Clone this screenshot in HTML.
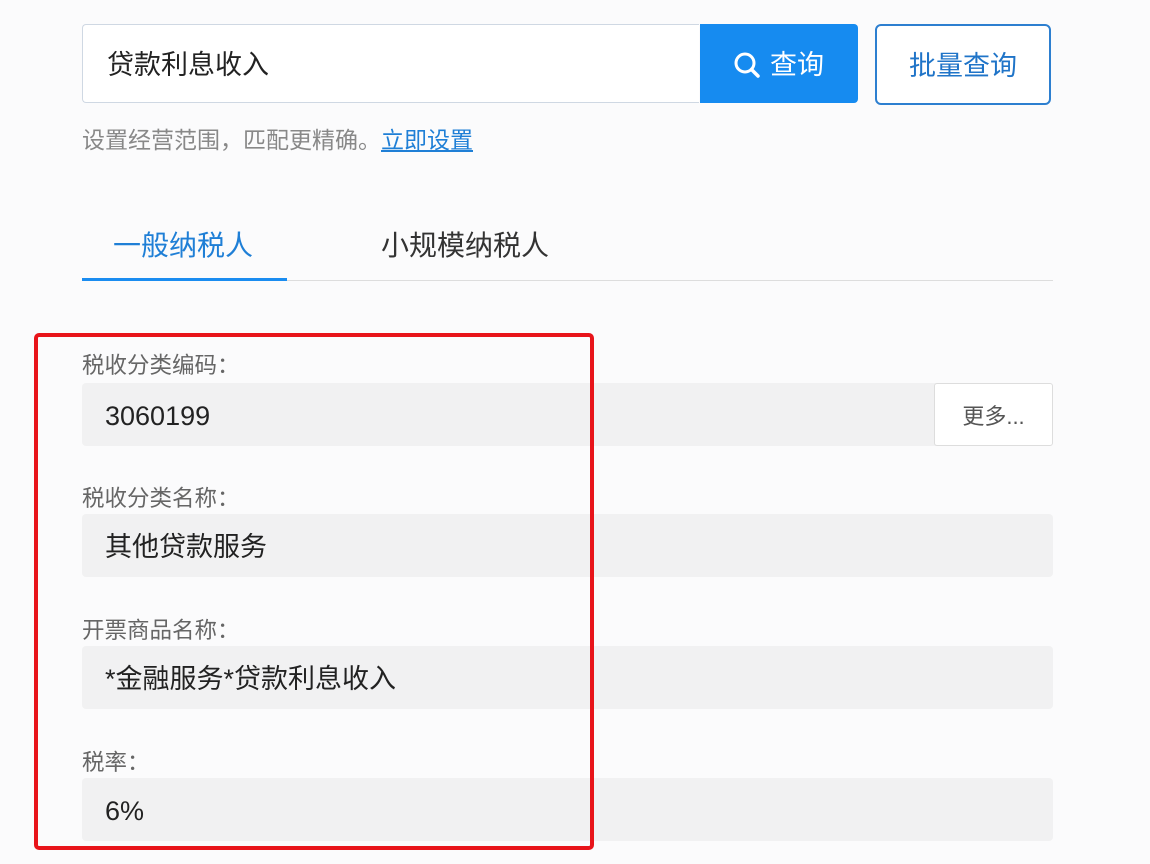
<!DOCTYPE html>
<html><head><meta charset="utf-8"><style>
body{margin:0;width:1150px;height:864px;background:#fbfbfc;font-family:"Liberation Sans","Noto Sans CJK SC",sans-serif;position:relative;overflow:hidden}
.a{position:absolute}
.inp{left:82px;top:24px;width:616px;height:77px;border:1px solid #cfd8e3;border-right:none;border-radius:4px 0 0 4px;background:#fff;font-size:27px;color:#222;line-height:81px;box-sizing:content-box}
.btn{left:700px;top:24px;width:158px;height:79px;background:#168bf0;border-radius:0 4px 4px 0;color:#fff;font-size:27px;line-height:83px}
.bb{left:875px;top:24px;width:172px;height:77px;border:2px solid #2d7fd0;border-radius:6px;color:#1f74c8;font-size:27px;line-height:81px;text-align:center;background:#fff}
.lab{left:82px;font-size:22.5px;color:#666}
.f{left:82px;width:971px;height:63px;background:#f1f1f2;border-radius:4px;font-size:27px;color:#222;line-height:67px;text-indent:23px}
</style></head><body>
<div class="a inp"><span style="margin-left:24px">贷款利息收入</span></div>
<div class="a btn"><svg class="a" style="left:33px;top:27px" width="28" height="28" viewBox="0 0 28 28"><circle cx="12" cy="12" r="9" fill="none" stroke="#fff" stroke-width="3"/><path d="M18.5 18.5L25 25" stroke="#fff" stroke-width="3.5" stroke-linecap="round"/></svg><span class="a" style="left:70px">查询</span></div>
<div class="a bb">批量查询</div>
<div class="a" style="left:82px;top:121px;font-size:23px;color:#888">设置经营范围，匹配更精确。<span style="color:#1f7fd6;text-decoration:underline">立即设置</span></div>
<div class="a" style="left:113px;top:224px;font-size:28px;color:#1f7fd6">一般纳税人</div>
<div class="a" style="left:381px;top:224px;font-size:28px;color:#333">小规模纳税人</div>
<div class="a" style="left:82px;top:280px;width:971px;height:1px;background:#ddd"></div>
<div class="a" style="left:82px;top:278px;width:205px;height:3px;background:#1a8cf0"></div>
<div class="a lab" style="top:348px">税收分类编码：</div>
<div class="a f" style="top:383px">3060199</div>
<div class="a" style="left:934px;top:383px;width:117px;height:61px;border:1px solid #ddd;background:#fff;border-radius:3px;font-size:22px;color:#555;line-height:65px;text-align:center">更多...</div>
<div class="a lab" style="top:481px">税收分类名称：</div>
<div class="a f" style="top:514px">其他贷款服务</div>
<div class="a lab" style="top:613px">开票商品名称：</div>
<div class="a f" style="top:646px">*金融服务*贷款利息收入</div>
<div class="a lab" style="top:745px">税率：</div>
<div class="a f" style="top:778px">6%</div>
<div class="a" style="left:34px;top:333px;width:552px;height:509px;border:4px solid #e8141a;border-radius:5px"></div>
</body></html>
